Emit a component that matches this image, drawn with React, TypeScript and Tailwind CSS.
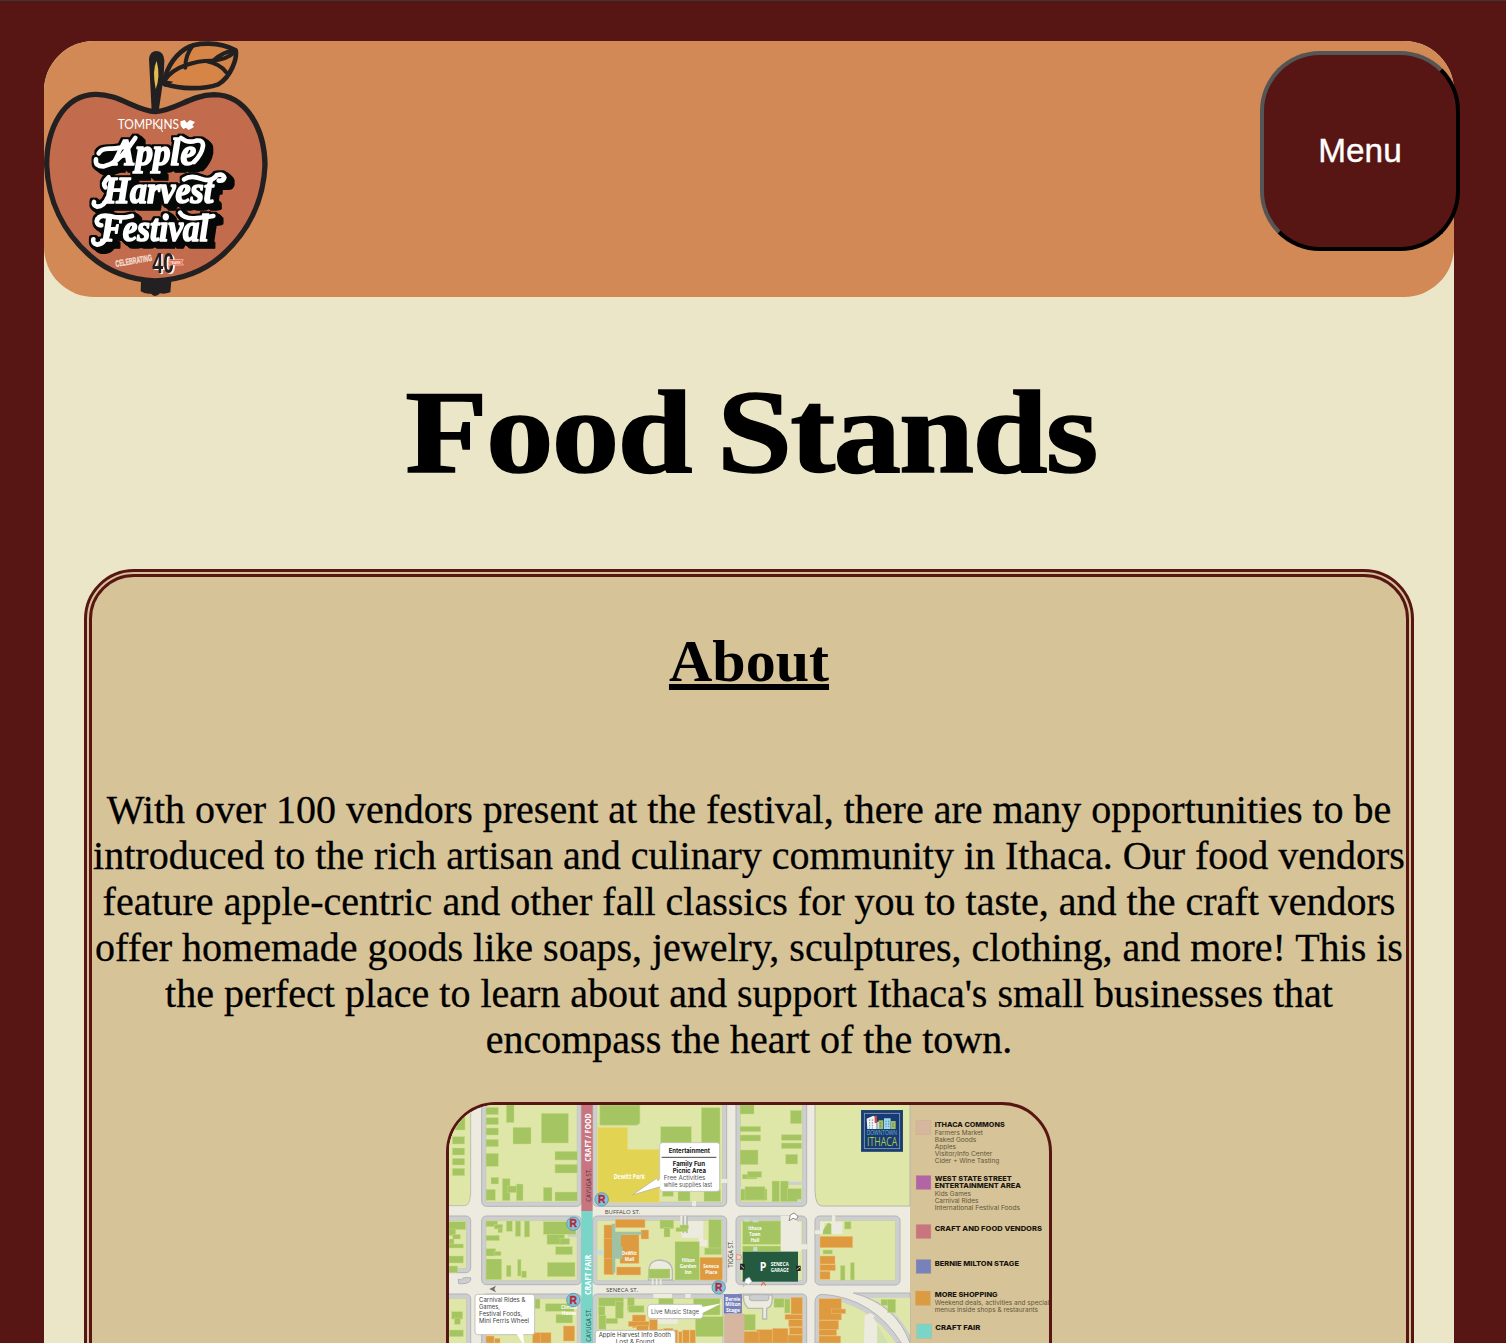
import React from "react";

const SERIF = "font-['Liberation_Serif',serif]";

function ScriptWord({ x, y, w, children }: { x: number; y: number; w: number; children: string }) {
  return (
    <text x={x} y={y} textLength={w} lengthAdjust="spacingAndGlyphs" fontFamily="'Liberation Serif', serif" fontWeight="700"
      fontStyle="italic" fontSize="116" fill="#fff" stroke="#fff" strokeWidth="5" strokeLinejoin="round">
      {children}
    </text>
  );
}

// Stacked offset copies of the outline form the lettering's block shadow
const SHADOW_STEPS = [3, 6, 9, 12, 15, 18];

const WORDS = [
  {
    text: "Apple", x: 246, y: 405, w: 252,
    swashes: ["M316 324L296 352Q262 400 222 409Q194 410 198 388M206 370Q214 354 244 356Q270 356 290 347", "M453 324Q473 341 499 332Q520 329 519 348Q515 374 492 396"],
  },
  {
    text: "Harvest", x: 220, y: 520, w: 330,
    swashes: ["M236 442Q216 460 226 472M232 504Q222 530 202 530Q188 526 192 516", "M462 448Q482 434 512 446Q545 458 560 436Q578 430 583 443Q580 454 566 452"],
  },
  {
    text: "Festival", x: 212, y: 634, w: 324,
    swashes: ["M306 558Q270 568 240 558Q204 552 200 574Q202 586 214 586M236 602Q226 642 202 644Q186 640 190 628", "M450 548Q462 568 500 564Q526 562 550 558"],
  },
];

function Lettering() {
  return (
    <>
      <filter id="block-shadow" x="-10%" y="-10%" width="125%" height="130%" colorInterpolationFilters="sRGB">
        <feMorphology in="SourceAlpha" operator="dilate" radius="5" result="grown" />
        <feGaussianBlur in="grown" stdDeviation="1" result="soft" />
        <feFlood floodColor="#050807" />
        <feComposite in2="soft" operator="in" result="ink" />
        {SHADOW_STEPS.map((d) => (
          <feOffset key={d} in="ink" dx={d} dy={d * 0.8} result={`ink${d}`} />
        ))}
        <feMerge>
          {SHADOW_STEPS.map((d) => <feMergeNode key={d} in={`ink${d}`} />)}
          <feMergeNode in="ink" />
          <feMergeNode in="SourceGraphic" />
        </feMerge>
      </filter>
      {WORDS.map((word) => (
        <g key={word.text} filter="url(#block-shadow)">
          {word.swashes.map((d) => (
            <path key={d} d={d} fill="none" stroke="#fff" strokeWidth="14" strokeLinecap="round" strokeLinejoin="round" />
          ))}
          <ScriptWord x={word.x} y={word.y} w={word.w}>{word.text}</ScriptWord>
        </g>
      ))}
    </>
  );
}

function AppleLogo() {
  return (
    <svg viewBox="42 33 672 768" className="block h-64 w-56 shrink-0" aria-label="Tompkins Apple Harvest Festival">
      <path
        d="M376 245C318 243 266 191 195 193C100 195 50 297 50 405C54 510 99 606 182 679C238 728 310 750 376 753C445 750 516 728 573 679C656 606 701 510 705 405C704 297 649 195 552 194C481 195 437 242 376 245Z"
        fill="#c36b4d" stroke="#232021" strokeWidth="16" strokeLinejoin="round"
      />
      <path d="M333 753L424 753L421 787Q402 794 390 790Q376 806 363 791Q344 793 332 784Z" fill="#232021" />
      <path d="M365 243L357 88Q359 63 380 63Q402 65 403 91L401 142L386 243Z" fill="#232021" />
      <path d="M380 92Q366 120 377 177Q392 141 380 92Z" fill="#e5bd4d" />
      <path d="M404 155C405 130 425 83 465 57C500 34 570 36 617 61C622 86 602 142 565 163C516 180 451 177 404 162Z" fill="#d78547" stroke="#232021" strokeWidth="14" strokeLinejoin="round" />
      <path d="M404 151C431 108 500 91 548 92C575 90 597 83 616 64M466 113Q465 76 489 46M531 94Q568 101 588 126M551 91Q584 61 613 64" fill="none" stroke="#232021" strokeWidth="12" strokeLinecap="round" />
      <path d="M404 151L430 155L407 171L390 162Z" fill="#232021" />
      <text x="263" y="297" textLength="184" lengthAdjust="spacingAndGlyphs" fontFamily="Lato, sans-serif" fontSize="39" fill="#fff">TOMPKINS</text>
      <path d="M388 288L398 306" stroke="#fff" strokeWidth="3" />
      <path d="M451 274L464 270L470 278L480 270L495 276L487 285L492 291L476 300L468 293L460 297L452 287Z" fill="#fff" />

      <Lettering />

      <text x="258" y="711" transform="rotate(-10 258 711)" textLength="111" lengthAdjust="spacingAndGlyphs" fontFamily="'Liberation Sans', sans-serif" fontWeight="700" fontSize="27" fill="#f3ddd0" stroke="#f3ddd0" strokeWidth="1">CELEBRATING</text>
      <text x="367" y="728" textLength="65" lengthAdjust="spacingAndGlyphs" fontFamily="'Liberation Sans', sans-serif" fontWeight="700" fontSize="88" fill="#232021" className="drop-shadow-[5px_3px_0_#fff]">40</text>
      <path d="M417 689H460L455 697L460 705H417Z" fill="#e4593a" stroke="#f6dccb" strokeWidth="2" />
      <text x="420" y="702" textLength="34" lengthAdjust="spacingAndGlyphs" fontFamily="'Liberation Sans', sans-serif" fontWeight="700" fontSize="13" fill="#fff">YEARS!</text>
    </svg>
  );
}

type Box = [number, number, number, number];

// [x, y, width, height] of every city block bordered by a sidewalk
const BLOCKS: Box[] = [
  [0, 363, 92, 170], [125, 10, 299, 324], [125, 363, 299, 206], [458, 10, 402, 324], [458, 363, 402, 206],
  [888, 10, 212, 324], [888, 363, 212, 206], [1125, 363, 255, 207],
  [0, 597, 92, 250], [125, 597, 299, 250], [458, 597, 402, 250], [888, 597, 212, 250],
];

const GREEN: Box[] = [
  [27, 65, 48, 40], [37, 125, 37, 22], [37, 159, 37, 21], [37, 190, 37, 20], [37, 220, 37, 22],
  [138, 37, 37, 22], [138, 68, 37, 21], [138, 99, 37, 21], [138, 133, 37, 22], [138, 175, 37, 39],
  [199, 30, 23, 53], [219, 97, 54, 50], [304, 55, 81, 89], [345, 169, 67, 26], [345, 208, 67, 26],
  [153, 247, 23, 20], [138, 283, 28, 33], [187, 251, 23, 66], [203, 273, 46, 20], [229, 267, 20, 50], [310, 277, 26, 41], [345, 291, 67, 27],
  [27, 380, 50, 24], [27, 402, 20, 20], [38, 418, 23, 14], [27, 432, 15, 20], [27, 447, 43, 12], [27, 483, 43, 21], [27, 513, 26, 20],
  [138, 378, 35, 17], [163, 388, 25, 14], [174, 400, 13, 13], [199, 378, 18, 31], [226, 378, 16, 46], [253, 378, 16, 48],
  [138, 421, 40, 16], [138, 461, 29, 22], [164, 469, 19, 13], [138, 492, 47, 62], [199, 511, 14, 34], [233, 493, 10, 50], [245, 528, 14, 20],
  [310, 380, 98, 38], [321, 418, 52, 30], [360, 430, 29, 18], [347, 455, 50, 24], [322, 502, 83, 43],
  [35, 650, 33, 22], [43, 669, 18, 19], [28, 705, 42, 20], [285, 612, 15, 29], [316, 626, 86, 23], [348, 658, 50, 26],
  [662, 95, 92, 50], [784, 38, 56, 250], [668, 286, 32, 18], [714, 286, 36, 32], [792, 285, 50, 34],
  [660, 375, 41, 26], [672, 398, 18, 28], [708, 398, 35, 12], [720, 390, 25, 12], [806, 374, 38, 103], [794, 459, 50, 20],
  [705, 440, 73, 115], [625, 522, 65, 28],
  [475, 608, 76, 25], [475, 634, 20, 28], [526, 620, 24, 50], [562, 608, 21, 38], [565, 632, 47, 20], [476, 661, 22, 42], [498, 670, 35, 16],
  [656, 610, 44, 38], [712, 628, 30, 15], [760, 610, 80, 50], [766, 665, 84, 60],
  [900, 30, 42, 27], [900, 94, 62, 16], [900, 120, 62, 18], [900, 165, 54, 44], [907, 238, 44, 14], [922, 229, 43, 18],
  [1051, 46, 34, 40], [1024, 119, 61, 17], [1024, 144, 61, 17], [1037, 178, 36, 29],
  [902, 282, 79, 34], [915, 275, 60, 40], [996, 258, 22, 62], [1021, 258, 24, 62], [1042, 281, 42, 39],
  [908, 378, 114, 70], [908, 453, 114, 16], [1214, 380, 19, 22], [1149, 465, 28, 12],
  [1201, 512, 14, 44], [1231, 503, 12, 52], [1002, 610, 30, 27], [1034, 612, 16, 42], [902, 658, 44, 48], [1323, 613, 36, 18], [1343, 613, 24, 40],
];

const ORANGE: Box[] = [
  [492, 390, 29, 149], [492, 430, 25, 60], [526, 373, 89, 25], [540, 419, 57, 86], [603, 405, 23, 27], [530, 516, 72, 24],
  [780, 487, 67, 68], [370, 693, 34, 45], [138, 723, 24, 21], [164, 730, 16, 14], [278, 713, 26, 31], [302, 713, 31, 31],
  [577, 660, 40, 38], [565, 679, 62, 15], [590, 692, 35, 50], [628, 674, 24, 68], [655, 703, 16, 40], [671, 700, 28, 44], [702, 705, 11, 39], [716, 710, 10, 34], [728, 705, 20, 39], [750, 705, 16, 39],
  [1140, 424, 98, 34], [1140, 483, 45, 24], [1140, 509, 46, 18], [1140, 529, 30, 24],
  [1053, 607, 34, 50], [1035, 658, 52, 15], [1046, 674, 41, 21], [1048, 697, 39, 22], [1042, 720, 45, 24], [998, 700, 46, 44], [950, 704, 48, 40], [903, 709, 54, 35],
  [1137, 611, 67, 64], [1175, 642, 42, 14], [1137, 676, 59, 27], [1137, 703, 53, 19], [1137, 723, 65, 21],
];

const SWATCHES = [
  { y: 76, x: 1428, c: "#d7b69f" }, { y: 241, x: 1428, c: "#b265a4" }, { y: 388, x: 1428, c: "#c9757f" },
  { y: 493, x: 1428, c: "#7781bb" }, { y: 588, x: 1426, c: "#db9b40" }, { y: 687, x: 1430, c: "#79d5c7" },
];

const LEGEND: { x: number; y: number; w: number; t: string; b?: boolean }[] = [
  { x: 1484, y: 95, w: 210, t: "ITHACA COMMONS", b: true },
  { x: 1484, y: 119, w: 145, t: "Farmers Market" },
  { x: 1484, y: 140, w: 125, t: "Baked Goods" },
  { x: 1484, y: 161, w: 64, t: "Apples" },
  { x: 1484, y: 182, w: 173, t: "Visitor/Info Center" },
  { x: 1484, y: 203, w: 194, t: "Cider + Wine Tasting" },
  { x: 1484, y: 257, w: 231, t: "WEST STATE STREET", b: true },
  { x: 1484, y: 279, w: 259, t: "ENTERTAINMENT AREA", b: true },
  { x: 1484, y: 303, w: 109, t: "Kids Games" },
  { x: 1484, y: 325, w: 131, t: "Carnival Rides" },
  { x: 1484, y: 346, w: 256, t: "International Festival Foods" },
  { x: 1484, y: 408, w: 322, t: "CRAFT AND FOOD VENDORS", b: true },
  { x: 1484, y: 512, w: 253, t: "BERNIE MILTON STAGE", b: true },
  { x: 1484, y: 607, w: 189, t: "MORE SHOPPING", b: true },
  { x: 1484, y: 630, w: 343, t: "Weekend deals, activities and special" },
  { x: 1484, y: 652, w: 310, t: "menus inside shops & restaurants" },
  { x: 1486, y: 705, w: 135, t: "CRAFT FAIR", b: true },
];

function Label({ x, y, w, size = 18, fill = "#fff", bold = false, rotate = false, children }: {
  x: number; y: number; w: number; size?: number; fill?: string; bold?: boolean; rotate?: boolean; children: string;
}) {
  return (
    <text x={x} y={y} textLength={w} lengthAdjust="spacingAndGlyphs" fontSize={size} fill={fill}
      fontWeight={bold ? 700 : 400} transform={rotate ? `rotate(-90 ${x} ${y})` : undefined}>
      {children}
    </text>
  );
}

function Restroom({ x, y }: { x: number; y: number }) {
  return (
    <g>
      <circle cx={x} cy={y} r="20" fill="#86c3d6" stroke="#5b9fba" strokeWidth="3" />
      <text x={x} y={y + 11} textAnchor="middle" fontFamily="'Liberation Sans', sans-serif" fontWeight="700" fontSize="31" fill="#b3263b" stroke="#b3263b" strokeWidth="1">R</text>
    </g>
  );
}

function FestivalMap() {
  return (
    <svg viewBox="27 30 1800 1200" className="block h-[400px] w-[600px]" fontFamily="'Open Sans', sans-serif" aria-label="Festival map">
      <rect x="0" y="0" width="1410" height="1300" fill="#edebdf" />
      <path d="M0 0H92V293Q90 332 74 332H0Z" fill="#dfe7a8" stroke="#bcbdb5" strokeWidth="3" />
      <path d="M1410 0H1125V288Q1127 333 1145 333H1410Z" fill="#dfe7a8" stroke="#b5b7ae" strokeWidth="3" />
      {BLOCKS.map(([x, y, w, h]) => (
        <g key={`${x}-${y}`}>
          <rect x={x} y={y} width={w} height={h} rx="14" fill="#cccecf" stroke="#b3b5b5" strokeWidth="3" />
          <rect x={x + 13} y={y + 13} width={w - 26} height={h - 26} fill="#dfe7a8" stroke="#c0c4b1" strokeWidth="1.5" />
        </g>
      ))}
      <path d="M1125 744V620Q1127 597 1150 598Q1300 610 1384 744Z" fill="#cccecf" stroke="#b3b5b5" strokeWidth="3" />
      <path d="M1137 744V620Q1139 610 1152 611Q1285 624 1368 744Z" fill="#dfe7a8" />
      <path d="M1274 662L1290 654L1312 688V744H1272Z" fill="#edebdf" />
      <path d="M1240 594H1410V744Q1368 628 1240 594Z" fill="#cccecf" stroke="#b3b5b5" strokeWidth="3" />
      <path d="M1286 608H1410V720Q1368 638 1286 608Z" fill="#dfe7a8" />
      <path d="M1312 690L1344 744H1312Z" fill="#cfe0aa" />
      <path d="M1281 672L1292 654L1304 663L1294 678Z" fill="#edebdf" />

      <path d="M55 552Q66 558 70 548H92V557Q84 568 56 566Z" fill="#cccecf" stroke="#b3b5b5" strokeWidth="3" />
      <path d="M148 582L168 572L163 582L168 592Z" fill="#6d6c67" />
      <path d="M384 416H424V426H384Z" fill="#cccecf" />
      <path d="M721 362H741V414H721ZM1176 361H1186V380H1176ZM1140 380H1207V417H1172V384H1152V417H1125V406H1140ZM1022 362H1070V380L1083 382V469H1022ZM1083 448H1102V463H1083ZM756 318H768V334H756ZM843 252H862V264H843ZM640 597H696V609H640ZM736 597H752V609H736ZM635 672H713V686H635Z" fill="#edebdf" />
      <path d="M725 378H790V434H802V454H776V428H725Z" fill="#edebdf" />
      <path d="M730 362V414M741 362V414" stroke="#b5b7b6" strokeWidth="5" />
      <path d="M627 520Q630 496 660 495Q697 498 697 530V555H625Z" fill="#edebdf" stroke="#b7b9b5" strokeWidth="4" />
      <path d="M638 552V569M650 552V569M662 552V569" stroke="#edebdf" strokeWidth="5" />
      <path d="M911 600H996Q1000 637 980 640V672H968V640H925Q908 625 911 600Z" fill="#edebdf" stroke="#b7b9b5" strokeWidth="4" />
      <rect x="928" y="599" width="59" height="18" rx="8" fill="#cccecf" stroke="#b3b5b5" strokeWidth="3" />
      <path d="M1045 260H1085V269H1045Z" fill="#cccecf" />
      <rect x="900" y="275" width="10" height="38" fill="#d7dcdb" />

      <path d="M472 97H563V163H658V322H472Z" fill="#e3d353" stroke="#ecdd83" strokeWidth="2" />
      <path d="M479 30H600V85Q593 92 583 91H479Z" fill="#a5c562" stroke="#c8dc8e" strokeWidth="2" />
      {GREEN.map(([x, y, w, h]) => (
        <rect key={`${x}-${y}-${w}`} x={x} y={y} width={w} height={h} fill="#a5c562" stroke="#c5db83" strokeWidth="1.5" />
      ))}
      <path d="M1150 404L1164 383L1174 387V418H1148Z" fill="#a5c562" />
      {ORANGE.map(([x, y, w, h]) => (
        <rect key={`${x}-${y}-${w}`} x={x} y={y} width={w} height={h} fill="#dd9a3f" stroke="#efbd78" strokeWidth="1.5" />
      ))}
      <path d="M515 386H526V410H606V419H543V455H548V491H526V533H517Z" fill="#9fc2a4" />
      <path d="M470 465H492V480H470ZM913 370H928V380H913ZM938 374H955V382H938ZM940 455H952V468H940ZM1072 313H1084V321H1072Z" fill="#c6ddd3" />

      <rect x="424" y="0" width="34" height="348" fill="#c9757f" />
      <rect x="424" y="348" width="34" height="900" fill="#79d5c7" />
      <Label x={452} y={200} w={145} size={24} bold rotate>CRAFT / FOOD</Label>
      <Label x={452} y={320} w={100} size={19} fill="#59363c" rotate>CAYUGA ST.</Label>
      <Label x={452} y={600} w={121} size={24} bold rotate>CRAFT FAIR</Label>
      <Label x={452} y={740} w={100} size={19} fill="#2f5955" rotate>CAYUGA ST.</Label>
      <Label x={494} y={356} w={107} fill="#45443f">BUFFALO ST.</Label>
      <Label x={498} y={590} w={97} fill="#45443f">SENECA ST.</Label>
      <Label x={880} y={518} w={82} size={19} fill="#45443f" rotate>TIOGA ST.</Label>
      <Label x={521} y={251} w={94} size={21} bold>Dewitt Park</Label>
      <Label x={546} y={480} w={45} size={17} bold>DeWitt</Label>
      <Label x={554} y={499} w={29} size={17} bold>Mall</Label>
      <Label x={725} y={500} w={39} size={17} bold>Hilton</Label>
      <Label x={719} y={519} w={50} size={17} bold>Garden</Label>
      <Label x={734} y={537} w={21} size={17} bold>Inn</Label>
      <Label x={790} y={519} w={47} size={17} bold>Seneca</Label>
      <Label x={796} y={537} w={36} size={17} bold>Place</Label>
      <Label x={925} y={405} w={40} size={17} bold>Ithaca</Label>
      <Label x={928} y={424} w={33} size={17} bold>Town</Label>
      <Label x={932} y={442} w={26} size={17} bold>Hall</Label>
      <Label x={363} y={643} w={48} size={16} bold>Clinton</Label>
      <Label x={366} y={660} w={42} size={16} bold>House</Label>

      <path d="M650 250L577 300L664 274Z" fill="#fff" stroke="#aaa" strokeWidth="2" />
      <rect x="659" y="143" width="180" height="146" rx="8" fill="#fff" stroke="#c1c0b8" strokeWidth="2.5" />
      <path d="M661 251L651 263L661 278Z" fill="#fff" />
      <path d="M665 187H829" stroke="#222" strokeWidth="2.5" />
      <g fontFamily="Inter, sans-serif">
        <Label x={686} y={174} w={124} bold fill="#151515">Entertainment</Label>
        <Label x={698} y={212} w={97} bold fill="#151515">Family Fun</Label>
        <Label x={698} y={233} w={100} bold fill="#151515">Picnic Area</Label>
        <Label x={671} y={256} w={125} size={17} fill="#555">Free Activities</Label>
        <Label x={671} y={276} w={145} size={17} fill="#555">while supplies last</Label>
      </g>

      <rect x="105" y="598" width="179" height="121" rx="8" fill="#fff" stroke="#b8bab0" strokeWidth="2.5" />
      <path d="M230 716L253 754L249 716Z" fill="#fff" />
      <g fontFamily="Inter, sans-serif">
        <Label x={117} y={622} w={139} size={17} fill="#444">Carnival Rides &amp;</Label>
        <Label x={117} y={643} w={63} size={17} fill="#444">Games,</Label>
        <Label x={117} y={664} w={130} size={17} fill="#444">Festival Foods,</Label>
        <Label x={117} y={685} w={150} size={17} fill="#444">Mini Ferris Wheel</Label>
      </g>
      <rect x="623" y="628" width="166" height="43" rx="10" fill="#fff" stroke="#b8bab0" strokeWidth="2.5" />
      <path d="M786 636L845 625L786 655Z" fill="#fff" />
      <rect x="466" y="706" width="240" height="70" rx="8" fill="#fff" stroke="#b8bab0" strokeWidth="2.5" />
      <g fontFamily="Inter, sans-serif">
        <Label x={633} y={657} w={144} size={17} fill="#555">Live Music Stage</Label>
        <Label x={476} y={726} w={217} size={17} fill="#444">Apple Harvest Info Booth</Label>
        <Label x={527} y={747} w={116} size={17} fill="#444">Lost &amp; Found</Label>
      </g>
      <rect x="853" y="656" width="60" height="90" fill="#d7b69f" />
      <rect x="853" y="599" width="51" height="55" fill="#7781bb" stroke="#5e68a8" strokeWidth="2" />
      <Label x={856} y={617} w={45} size={17} bold>Bernie</Label>
      <Label x={856} y={633} w={46} size={17} bold>Milton</Label>
      <Label x={858} y={650} w={42} size={17} bold>Stage</Label>

      <rect x="908" y="470" width="166" height="90" fill="#245a40" />
      <Label x={959} y={528} w={20} size={38} bold>P</Label>
      <Label x={992} y={513} w={54} size={17} bold>SENECA</Label>
      <Label x={992} y={531} w={54} size={17} bold>GARAGE</Label>
      <path d="M900 506H914V524H900ZM1068 512H1082V528H1068Z" fill="#23231f" />
      <path d="M902 511L912 520M1070 524L1080 516" stroke="#c8c8c0" strokeWidth="3" />
      <path d="M890 478L904 482V492L890 494Z" fill="#f4d5cf" stroke="#d97968" strokeWidth="2" />
      <path d="M964 572L970 561L977 572" fill="none" stroke="#df7563" strokeWidth="4" />
      <path d="M1047 377L1051 360L1062 354L1074 364L1069 374L1059 370Z" fill="#fff" stroke="#77756d" strokeWidth="2.5" />
      <path d="M910 575L917 552L928 547L936 560L925 569L918 564Z" fill="#fff" stroke="#aaa" strokeWidth="2" />
      <Restroom x={400} y={386} />
      <Restroom x={400} y={615} />
      <Restroom x={485} y={313} />
      <Restroom x={836} y={577} />

      <rect x="1264" y="46" width="124" height="123" fill="#173c73" stroke="#123262" strokeWidth="2" />
      <rect x="1273" y="55" width="106" height="106" fill="none" stroke="#8ba0bb" strokeWidth="2.5" />
      <path d="M1280 71L1300 62L1310 68V102H1282ZM1312 80H1319V102H1312Z" fill="#f1f4f2" />
      <path d="M1304 62H1311V84H1304Z" fill="#d0423c" />
      <path d="M1316 76H1330V102H1316ZM1353 78H1367V102H1353Z" fill="#a2bd61" />
      <path d="M1332 70H1352V102H1332Z" fill="#9cd6ec" />
      <path d="M1289 73V101M1297 73V101M1321 82V99M1338 77V96M1346 77V96M1359 83V99" stroke="#486b8e" strokeWidth="2" strokeDasharray="5 3" />
      <Label x={1280} y={121} w={91} size={19} fill="#7ab3d3">DOWNTOWN</Label>
      <Label x={1281} y={153} w={91} size={36} fill="#a9c64e">ITHACA</Label>

      {SWATCHES.map((s) => (
        <rect key={s.y} x={s.x} y={s.y} width="45" height="43" fill={s.c} stroke="#cfab86" strokeWidth="2" strokeOpacity=".6" />
      ))}
      <g fontFamily="Inter, sans-serif">
        {LEGEND.map((l) => (
          <text key={l.y} x={l.x} y={l.y} textLength={l.w} lengthAdjust="spacingAndGlyphs" fontSize={l.b ? 20 : 17}
            fontWeight={l.b ? 800 : 400} fill={l.b ? "#1b1710" : "#625638"}>
            {l.t}
          </text>
        ))}
      </g>
    </svg>
  );
}

const ABOUT = [
  "With over 100 vendors present at the festival, there are many opportunities to be",
  "introduced to the rich artisan and culinary community in Ithaca. Our food vendors",
  "feature apple-centric and other fall classics for you to taste, and the craft vendors",
  "offer homemade goods like soaps, jewelry, sculptures, clothing, and more! This is",
  "the perfect place to learn about and support Ithaca's small businesses that",
  "encompass the heart of the town.",
];

export default function App() {
  return (
    <div className={`h-screen overflow-hidden border-t border-[#3b3638] bg-[#571613] pt-10 pr-[52px] pl-11 text-black ${SERIF}`}>
      <main className="h-[1700px] rounded-t-[50px] bg-[#ebe6c7]">
        <header className="flex h-64 items-start justify-between rounded-[50px] bg-[#d38956]">
          <AppleLogo />
          <button className="mt-2.5 -mr-1.5 size-[200px] shrink-0 rounded-[60px] border-4 border-t-[#555] border-r-black border-b-black border-l-[#555] bg-[#571613] font-['Liberation_Sans',sans-serif] text-[33.33px] text-white [-webkit-text-stroke:0.4px_white]">
            Menu
          </button>
        </header>
        <h1 className="mt-[68px] flex h-[136px] items-center justify-center text-[118px] leading-[136px] font-bold whitespace-nowrap">
          <span className="-mr-[3px] inline-block scale-x-[1.145] tracking-[-1.6px] [word-spacing:-5px] [-webkit-text-stroke:1.5px_black]">Food Stands</span>
        </h1>
        <section className="mx-10 mt-[68px] h-[1300px] rounded-[50px] border-8 border-double border-[#571613] bg-[#d6c398] text-center">
          <h2 className="mt-[50px] text-[60px] leading-[69px] font-bold underline decoration-[6px] underline-offset-[3px] [text-decoration-skip-ink:none]">
            About
          </h2>
          <p className="mt-[90.5px] text-[40px] leading-[46px] whitespace-nowrap">
            {ABOUT.map((line) => (
              <span key={line} className="flex justify-center [-webkit-text-stroke:0.3px_black]">{line}</span>
            ))}
          </p>
          <div className="mx-auto mt-[39.5px] w-[606px] overflow-hidden rounded-[50px] border-[3px] border-[#571613]">
            <FestivalMap />
          </div>
        </section>
      </main>
    </div>
  );
}
